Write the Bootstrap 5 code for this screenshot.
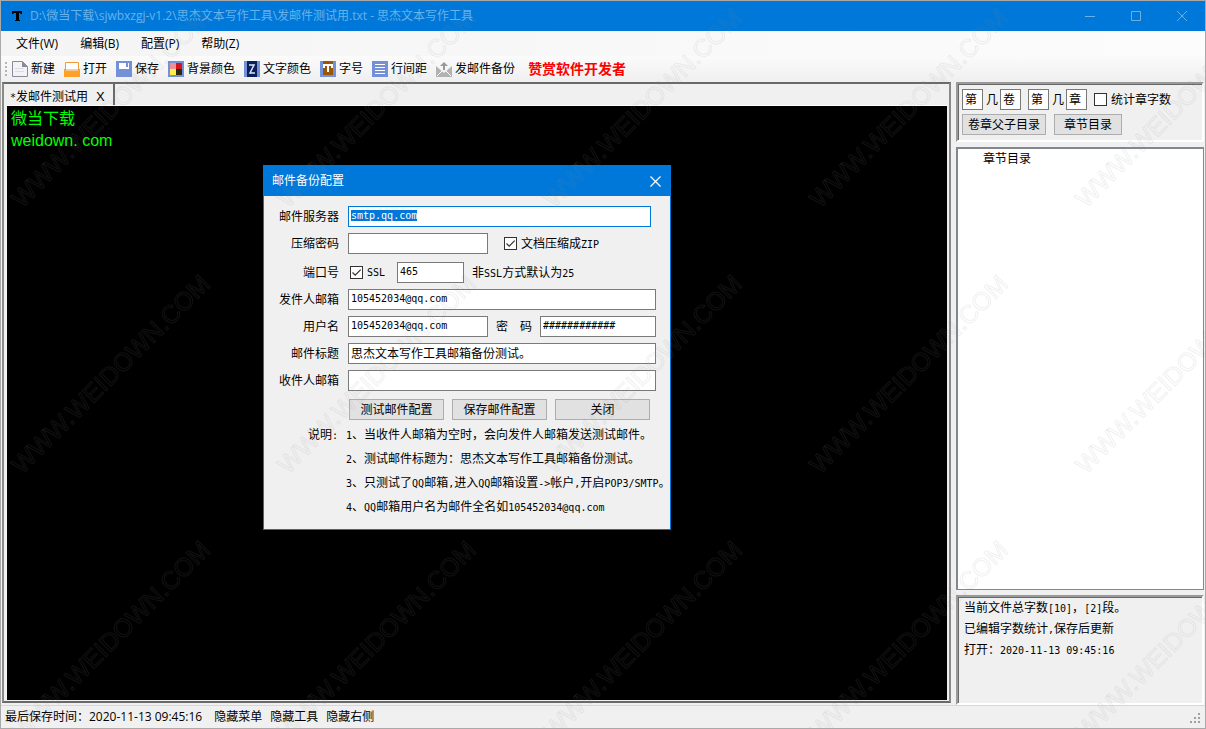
<!DOCTYPE html>
<html lang="zh-CN">
<head>
<meta charset="utf-8">
<meta name="viewport" content="width=device-width, initial-scale=1">
<title>思杰文本写作工具</title>
<link href="https://cdn.jsdelivr.net/npm/bootstrap@5.3.0/dist/css/bootstrap.min.css" rel="stylesheet">
<style>
:root { --win-blue: #0078d9; --face: #f0f0f0; --ui: "Open Sans", "Noto Sans CJK SC", sans-serif; --song: "DejaVu Sans Mono", "Noto Sans CJK SC", monospace; }
body { font: 12px/16px var(--ui); color: #000; background: var(--face); }
.app-window { border: 1px solid #a9a9a9; background: var(--face); overflow: hidden; }
.titlebar { height: 30px; background: var(--win-blue); color: #68b2ea; padding-left: 10px; padding-right: 17px; }
.titlebar-text { padding-left: 7px; }
.window-buttons { gap: 34px; }
.winbtn, .plain { background: none; border: 0; padding: 0; color: inherit; line-height: 16px; }
.winbtn { display: flex; }
.menubar { height: 25px; gap: 22px; padding-left: 15px; background: linear-gradient(90deg, #f4f4f4, #fcfcfc); }
.menubar a, .statusbar a { color: #000; text-decoration: none; }
.toolstrip { height: 26px; gap: 9px; padding-left: 3px; background: linear-gradient(#fbfbfb, #efefef); }
.toolstrip .plain { display: flex; align-items: center; gap: 3px; white-space: nowrap; }
.toolstrip .grip { margin-right: -5px; }
.toolstrip .sponsor { color: #f00; font-size: 14px; font-weight: 700; margin-left: 4px; text-decoration: none; }
.workarea { padding: 0 1px; gap: 5px; }
.sunken { border: 2px solid; border-color: #9a9a9a #fff #fff #9a9a9a; box-shadow: inset 1px 1px #696969; }
.editor-frame { border: 2px solid; border-color: #696969 #8a8a8a #696969 #8a8a8a; padding: 0 2px 1px 3px; margin-bottom: 2px; }
.tabstrip { height: 22px; border-bottom: 1px solid #fff; }
.doc-tab { width: 108px; border-right: 2px solid #696969; padding: 4px 0 0 3px; font-family: var(--song); }
.doc-tab .plain { font-family: "Liberation Sans", sans-serif; font-size: 13px; }
.editor { background: #000; color: #0f0; border: 0; border-radius: 0; resize: none; padding: 2px 4px; font: 16px/22px "Liberation Sans", "Noto Sans CJK SC", sans-serif; outline: 0; }
.side { width: 248px; gap: 5px; font-family: var(--song); }
.side-tools { height: 60px; padding: 5px 0 0 4px; }
.volume-mark { gap: 0; margin-right: 7px; }
.volume-mark span { width: 17px; padding-left: 3px; }
.field { height: 21px; border: 1px solid #7a7a7a; border-radius: 0; background: #fff; padding: 0 2px 2px; color: #000; font: 12px/16px var(--song); outline: 0; min-width: 0; }
.field:focus { border-color: var(--win-blue); }
.field::selection { background: var(--win-blue); color: #fff; }
.field.latin, .latin { font-size: 10px; line-height: 12px; }
.char { width: 21px; }
.wbtn { height: 21px; border: 1px solid #adadad; background: #e1e1e1; padding: 0; color: #000; font: 12px/16px var(--song); }
.w-wide { width: 84px; }
.w-narrow { width: 68px; }
.tick { appearance: none; width: 13px; height: 13px; margin: 0; border: 1px solid #333; background: #fff; flex: none; }
.tick:checked { background: #fff url("data:image/svg+xml,%3Csvg xmlns='http://www.w3.org/2000/svg' viewBox='0 0 11 11'%3E%3Cpath d='M1.5 5.5l2.7 2.7L9.7 2.7' fill='none' stroke='%23333' stroke-width='1.2'/%3E%3C/svg%3E"); }
.tree { background: #fff; border: 2px solid #828790; border-right-width: 1px; border-bottom-width: 1px; padding: 2px 25px; }
.info { height: 110px; padding: 1px 6px; line-height: 21px; }
.statusbar { height: 23px; gap: 8px; padding: 0 4px; border-top: 1px solid #d7d7d7; }
.mail-dialog { position: absolute; left: 262px; top: 164px; width: 408px; height: 365px; border: 1px solid var(--win-blue); background: var(--face); font-family: var(--song); white-space: nowrap; }
.dialog-title { height: 30px; padding: 0 9px 0 8px; background: var(--win-blue); color: #fff; font-family: var(--ui); }
.mail-form { padding-top: 10px; gap: 6px; }
.form-line { height: 21px; padding-right: 14px; }
.form-line > .caption { width: 75px; margin-right: 9px; text-align: right; flex: none; }
.port-line { margin-top: 2px; }
.port-line .tick { margin-left: 2px; }
.server { width: 303px; }
.w-short { width: 140px; flex: none; }
.port { width: 67px; margin-left: 12px; flex: none; }
.actions { padding-left: 85px; margin-top: 2px; }
.actions .wbtn { width: 95px; }
.notes { line-height: 24px; padding: 3px 0 0 44px; gap: 8px; }
.watermark { position: absolute; inset: 0; width: 100%; height: 100%; pointer-events: none; }
</style>
</head>
<body>
<div class="app-window position-relative vh-100 d-flex flex-column">
  <header class="titlebar d-flex align-items-center">
    <svg width="12" height="12" viewBox="0 0 12 12"><path d="M1 1h10v3H9.500V3H8v7h1v1H4v-1h1V3H2.500v1H1z" fill="#000"/></svg>
    <span class="titlebar-text flex-grow-1">D:\微当下载\sjwbxzgj-v1.2\思杰文本写作工具\发邮件测试用.txt - 思杰文本写作工具</span>
    <div class="window-buttons d-flex align-items-center">
      <button class="winbtn" aria-label="最小化"><svg width="12" height="12"><path d="M1 6.500h10" stroke="currentColor"/></svg></button>
      <button class="winbtn" aria-label="最大化"><svg width="12" height="12"><path d="M1.500 1.500h9v9h-9z" fill="none" stroke="currentColor"/></svg></button>
      <button class="winbtn" aria-label="关闭"><svg width="12" height="12"><path d="M1 1l10 10M11 1L1 11" stroke="currentColor"/></svg></button>
    </div>
  </header>
  <nav class="menubar d-flex align-items-center">
    <a href="#">文件(W)</a><a href="#">编辑(B)</a><a href="#">配置(P)</a><a href="#">帮助(Z)</a>
  </nav>
  <div class="toolstrip d-flex align-items-center">
    <svg class="grip" width="4" height="16"><path d="M1 1h2v2H1zM1 5h2v2H1zM1 9h2v2H1zM1 13h2v2H1z" fill="#b5b5b5"/></svg>
    <button class="plain"><svg width="16" height="16"><path d="M.5.5h10l5 5v10H.5z" fill="#f2f2f7" stroke="#8a8a9c"/><path d="M10 0l6 6h-6z" fill="#8a8a9c"/><path d="M3 7.500h9M3 10.500h9" stroke="#dcdce6"/></svg>新建</button>
    <button class="plain"><svg width="16" height="16"><path d="M1.500 1.500h13V9h-13z" fill="#fff" stroke="#f09a3a"/><path d="M0 8h2v2h12V8h2v8H0z" fill="#ffa127"/></svg>打开</button>
    <button class="plain"><svg width="16" height="16"><path d="M0 0h16v16H0z" fill="#7390d8"/><path d="M3 2h10v6H3z" fill="#fff"/><path d="M10 2h2v4h-2z" fill="#7390d8"/></svg>保存</button>
    <button class="plain"><svg width="16" height="16"><path d="M0 0h16v16H0z" fill="#7390d8"/><path d="M2 2h6v6H2z" fill="#e8929c"/><path d="M8 2h6v6H8z" fill="#d0151c"/><path d="M2 8h6v6H2z" fill="#ffee48"/><path d="M8 8h6v6H8z" fill="#2b2810"/></svg>背景颜色</button>
    <button class="plain"><svg width="16" height="16"><path d="M0 0h16v16H0z" fill="#7390d8"/><path d="M3 0h10v16H3z" fill="#0a1e5c"/><path d="M5 4h5L6 12h5" fill="none" stroke="#dfe5f5" stroke-width="1.500"/></svg>文字颜色</button>
    <button class="plain"><svg width="16" height="16"><path d="M0 0h16v16H0z" fill="#7390d8"/><path d="M3 0h10v14H3z" fill="#985608"/><path d="M3 3h10v4h-2V5H9v6H7V5H5v2H3z" fill="#fff"/></svg>字号</button>
    <button class="plain"><svg width="16" height="16"><path d="M0 0h16v16H0z" fill="#7390d8"/><path d="M3 3.500h10M3 6.500h10M3 9.500h10M3 12.500h10" stroke="#fff"/></svg>行间距</button>
    <button class="plain"><svg width="16" height="16"><path d="M0 5l8 7 8-7v11H0z" fill="#b2b2b2"/><path d="M1 15l5-5M15 15l-5-5" stroke="#fff"/><path d="M8 1l4 4H9v4H7V5H4z" fill="#999"/></svg>发邮件备份</button>
    <a class="sponsor" href="#">赞赏软件开发者</a>
  </div>
  <main class="workarea d-flex flex-grow-1">
    <section class="editor-frame d-flex flex-column flex-grow-1">
      <div class="tabstrip d-flex"><div class="doc-tab d-flex gap-2 align-items-center"><span><span class="latin">*</span>发邮件测试用</span><button class="plain">X</button></div></div>
      <textarea class="editor flex-grow-1 w-100" aria-label="文本" spellcheck="false">微当下载
weidown. com</textarea>
    </section>
    <aside class="side d-flex flex-column flex-shrink-0">
      <div class="side-tools sunken d-flex flex-column gap-1">
        <div class="d-flex align-items-center">
          <div class="volume-mark d-flex align-items-center"><input class="field char" value="第" aria-label="卷前缀"><span>几</span><input class="field char" value="卷" aria-label="卷后缀"></div>
          <div class="volume-mark d-flex align-items-center"><input class="field char" value="第" aria-label="章前缀"><span>几</span><input class="field char" value="章" aria-label="章后缀"></div>
          <input class="tick me-1" type="checkbox" id="count"><label for="count">统计章字数</label>
        </div>
        <div class="d-flex gap-2"><button class="wbtn w-wide">卷章父子目录</button><button class="wbtn w-narrow">章节目录</button></div>
      </div>
      <div class="tree flex-grow-1">章节目录</div>
      <div class="info sunken">
        <div>当前文件总字数<span class="latin">[10]</span>，<span class="latin">[2]</span>段。</div>
        <div>已编辑字数统计<span class="latin">,</span>保存后更新</div>
        <div>打开：<span class="latin">2020-11-13 09:45:16</span></div>
      </div>
    </aside>
  </main>
  <footer class="statusbar d-flex align-items-center">
    <span class="me-1">最后保存时间：2020-11-13 09:45:16</span><a href="#">隐藏菜单</a><a href="#">隐藏工具</a><a href="#">隐藏右侧</a>
    <svg class="ms-auto align-self-end mb-1" width="11" height="11"><path d="M8 0h2v2H8zM4 4h2v2H4zM8 4h2v2H8zM0 8h2v2H0zM4 8h2v2H4zM8 8h2v2H8z" fill="#a0a0a0"/></svg>
  </footer>

  <div class="mail-dialog" role="dialog" aria-labelledby="dlg">
    <div class="dialog-title d-flex align-items-center justify-content-between"><span id="dlg">邮件备份配置</span>
      <button class="winbtn" aria-label="关闭"><svg width="11" height="11"><path d="M.5.5l10 10M10.500.5l-10 10" stroke="#fff" stroke-width="1.200"/></svg></button></div>
    <form class="mail-form d-flex flex-column">
      <div class="form-line d-flex align-items-center"><label class="caption" for="srv">邮件服务器</label><input id="srv" class="field latin server" value="smtp.qq.com" autofocus></div>
      <div class="form-line d-flex align-items-center"><label class="caption" for="zip">压缩密码</label><input id="zip" class="field w-short"><input class="tick ms-3 me-1" type="checkbox" id="tozip" checked><label for="tozip">文档压缩成<span class="latin">ZIP</span></label></div>
      <div class="form-line port-line d-flex align-items-center"><label class="caption" for="port">端口号</label><input class="tick me-1" type="checkbox" id="ssl" checked><label for="ssl" class="latin">SSL</label><input id="port" class="field latin port" value="465"><span class="ms-2">非<span class="latin">SSL</span>方式默认为<span class="latin">25</span></span></div>
      <div class="form-line d-flex align-items-center"><label class="caption" for="from">发件人邮箱</label><input id="from" class="field latin flex-grow-1" value="105452034@qq.com"></div>
      <div class="form-line d-flex align-items-center"><label class="caption" for="user">用户名</label><input id="user" class="field latin w-short" value="105452034@qq.com"><label class="mx-2" for="pw">密　码</label><input id="pw" class="field latin flex-fill w-25" value="############"></div>
      <div class="form-line d-flex align-items-center"><label class="caption" for="subj">邮件标题</label><input id="subj" class="field flex-grow-1" value="思杰文本写作工具邮箱备份测试。"></div>
      <div class="form-line d-flex align-items-center"><label class="caption" for="to">收件人邮箱</label><input id="to" class="field flex-grow-1"></div>
      <div class="d-flex gap-2 actions"><button type="button" class="wbtn">测试邮件配置</button><button type="button" class="wbtn">保存邮件配置</button><button type="button" class="wbtn">关闭</button></div>
    </form>
    <div class="notes d-flex"><span>说明<span class="latin">:</span></span>
      <div class="note-list"><div><span class="latin">1</span>、当收件人邮箱为空时，会向发件人邮箱发送测试邮件。</div><div><span class="latin">2</span>、测试邮件标题为：思杰文本写作工具邮箱备份测试。</div><div><span class="latin">3</span>、只测试了<span class="latin">QQ</span>邮箱<span class="latin">,</span>进入<span class="latin">QQ</span>邮箱设置<span class="latin">-&gt;</span>帐户<span class="latin">,</span>开启<span class="latin">POP3/SMTP</span>。</div><div><span class="latin">4</span>、<span class="latin">QQ</span>邮箱用户名为邮件全名如<span class="latin">105452034@qq.com</span></div></div>
    </div>
  </div>
  <svg class="watermark" aria-hidden="true"><defs><pattern id="wm" width="266" height="266" patternUnits="userSpaceOnUse"><text transform="translate(21 208) rotate(-45)" font-family="Liberation Sans" font-size="25" fill="none" stroke="#888" stroke-opacity=".12">WWW.WEIDOWN.COM</text></pattern></defs><rect width="100%" height="100%" fill="url(#wm)"/></svg>
</div>
<script src="https://cdn.jsdelivr.net/npm/bootstrap@5.3.0/dist/js/bootstrap.bundle.min.js"></script>
<script>
const server = document.getElementById('srv');
server.focus();
server.select();
</script>
</body>
</html>
